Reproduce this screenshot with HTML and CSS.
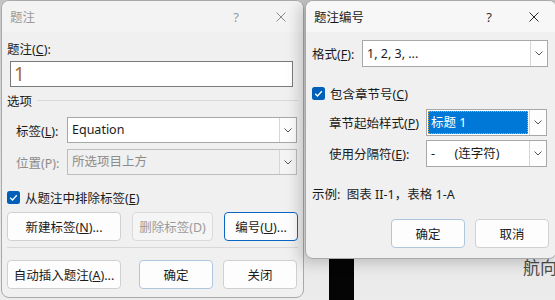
FILE: index.html
```html
<!DOCTYPE html>
<html lang="zh-CN">
<head>
    <meta charset="UTF-8">
    <title>题注</title>
    <link rel="stylesheet" href="styles.css">
</head>
<body>
    <div class="desktop">
        <div class="doc-bar"></div>
        <div class="doc-text">航向</div>

        <div class="dialog caption-dlg">
            <div class="titlebar inactive">
                <span class="title">题注</span>
                <span class="help">?</span>
                <svg class="close" width="10" height="10" viewBox="0 0 10 10"><path d="M0.5 0.5 L9.5 9.5 M9.5 0.5 L0.5 9.5"/></svg>
            </div>
            <div class="body">
                <div class="line-label">题注(<u>C</u>):</div>
                <div class="text-input">1</div>
                <div class="group-head"><span>选项</span><i></i></div>

                <div class="field-row">
                    <span class="field-label">标签(<u>L</u>):</span>
                    <div class="combo wide">
                        <span class="combo-value">Equation</span>
                        <span class="drop"><svg width="8" height="5" viewBox="0 0 8 5"><polyline points="0.5,0.5 4,4 7.5,0.5"/></svg></span>
                    </div>
                </div>
                <div class="field-row gap6">
                    <span class="field-label muted">位置(P):</span>
                    <div class="combo wide disabled">
                        <span class="combo-value">所选项目上方</span>
                        <span class="drop"><svg width="8" height="5" viewBox="0 0 8 5"><polyline points="0.5,0.5 4,4 7.5,0.5"/></svg></span>
                    </div>
                </div>

                <div class="check-row left-check">
                    <svg class="check" width="13" height="13" viewBox="0 0 13 13"><rect width="13" height="13" rx="2.5"/><polyline points="3.2,6.8 5.5,9 9.8,4.3"/></svg>
                    <span>从题注中排除标签(<u>E</u>)</span>
                </div>

                <div class="btn-row first">
                    <button class="btn w114">新建标签(<u>N</u>)...</button>
                    <button class="btn w80 disabled">删除标签(D)</button>
                    <button class="btn w74 focused">编号(<u>U</u>)...</button>
                </div>
                <div class="sep"></div>
                <div class="btn-row second">
                    <button class="btn w114">自动插入题注(<u>A</u>)...</button>
                    <button class="btn w74 default ok">确定</button>
                    <button class="btn w74 closebtn">关闭</button>
                </div>
            </div>
        </div>

        <div class="dialog number-dlg">
            <div class="titlebar">
                <span class="title">题注编号</span>
                <span class="help">?</span>
                <svg class="close" width="10" height="10" viewBox="0 0 10 10"><path d="M0.5 0.5 L9.5 9.5 M9.5 0.5 L0.5 9.5"/></svg>
            </div>
            <div class="body">
                <div class="field-row format-row">
                    <span class="field-label fmt">格式(<u>F</u>):</span>
                    <div class="combo fmt-combo">
                        <span class="combo-value">1, 2, 3, ...</span>
                        <span class="drop"><svg width="8" height="5" viewBox="0 0 8 5"><polyline points="0.5,0.5 4,4 7.5,0.5"/></svg></span>
                    </div>
                </div>

                <div class="check-row chapter-check">
                    <svg class="check" width="13" height="13" viewBox="0 0 13 13"><rect width="13" height="13" rx="2.5"/><polyline points="3.2,6.8 5.5,9 9.8,4.3"/></svg>
                    <span>包含章节号(<u>C</u>)</span>
                </div>

                <div class="field-row sub first-sub">
                    <span class="field-label sub-label">章节起始样式(<u>P</u>)</span>
                    <div class="combo sub-combo">
                        <span class="combo-value selected">标题 1</span>
                        <span class="drop"><svg width="8" height="5" viewBox="0 0 8 5"><polyline points="0.5,0.5 4,4 7.5,0.5"/></svg></span>
                    </div>
                </div>
                <div class="field-row sub second-sub">
                    <span class="field-label sub-label">使用分隔符(<u>E</u>):</span>
                    <div class="combo sub-combo">
                        <span class="combo-value">-&nbsp;&nbsp;&nbsp;&nbsp;&nbsp;&nbsp;(连字符)</span>
                        <span class="drop"><svg width="8" height="5" viewBox="0 0 8 5"><polyline points="0.5,0.5 4,4 7.5,0.5"/></svg></span>
                    </div>
                </div>

                <div class="example">示例:&nbsp; 图表 II-1，表格 1-A</div>

                <div class="btn-row right-btns">
                    <button class="btn w74 default">确定</button>
                    <button class="btn w74">取消</button>
                </div>
            </div>
        </div>
    </div>
</body>
</html>
```

FILE: styles.css
```css
* {
    box-sizing: border-box;
}

body {
    margin: 0;
    width: 555px;
    height: 300px;
    overflow: hidden;
    font-family: "Noto Sans", "Noto Sans CJK SC", sans-serif;
    font-size: 12.5px;
    color: #1b1b1b;
}

u {
    text-decoration: underline;
    text-underline-offset: 1px;
}

.desktop {
    position: relative;
    width: 555px;
    height: 300px;
    overflow: hidden;
    background: linear-gradient(#c4c4c4, #e2e2e2 60%, #ececec);
}

/* document behind the dialogs */
.doc-bar {
    position: absolute;
    left: 329px;
    top: 250px;
    width: 25px;
    height: 50px;
    background: #050505;
}

.doc-text {
    position: absolute;
    left: 523px;
    top: 254px;
    white-space: nowrap;
    font-family: "Noto Sans CJK SC", sans-serif;
    font-size: 17px;
    color: #4a4a4a;
}

.dialog {
    position: absolute;
    background: #f0f0f0;
    border: 1px solid #a9a9a9;
    border-radius: 8px;
    overflow: hidden;
}

.caption-dlg {
    left: 1px;
    top: 0;
    width: 303px;
    height: 298px;
}

.number-dlg {
    left: 305px;
    top: 0;
    width: 252px;
    height: 259px;
    box-shadow: -6px 4px 14px rgba(0, 0, 0, 0.18);
}

.titlebar {
    display: flex;
    align-items: center;
    height: 31px;
    padding-left: 8px;
    background: #f3f3f3;
}

.number-dlg .titlebar {
    background: #f7f7f7;
}

.titlebar .title {
    flex: 1;
    font-size: 12.5px;
}

.titlebar.inactive .title,
.titlebar.inactive .help {
    color: #9a9a9a;
}

.help {
    width: 12px;
    text-align: center;
    font-size: 13px;
    color: #333;
    margin-right: 34px;
}

.close {
    margin-right: 17px;
}

.close path {
    stroke: #2a2a2a;
    stroke-width: 1;
    fill: none;
}

.titlebar.inactive .close path {
    stroke: #8a8a8a;
}

.caption-dlg .body {
    padding: 0 5px 0 5px;
}

.number-dlg .body {
    padding: 0 7px 0 6px;
}

.line-label {
    height: 18px;
    line-height: 18px;
    margin-top: 9px;
}

.text-input {
    margin-top: 2px;
    margin-left: 3px;
    width: 283px;
    height: 26px;
    border: 1px solid #7a7a7a;
    background: #fff;
    padding-left: 3px;
    font-family: "Noto Sans", sans-serif;
    font-size: 19px;
    line-height: 24px;
    color: #a9691f;
}

.group-head {
    display: flex;
    align-items: center;
    height: 18px;
    margin-top: 4px;
}

.group-head i {
    flex: 1;
    height: 1px;
    margin-left: 5px;
    background: #d9d9d9;
}

.field-row {
    display: flex;
    align-items: center;
    margin-top: 8px;
}

.field-row.gap6 {
    margin-top: 6px;
}

.field-label {
    width: 60px;
    padding-left: 9px;
}

.muted {
    color: #8c8c8c;
}

.combo {
    display: flex;
    height: 26px;
    border: 1px solid #a8a8a8;
    background: #fff;
}

.combo.wide {
    width: 230px;
}

.combo.disabled {
    background: #f0f0f0;
    border-color: #bdbdbd;
    color: #8c8c8c;
}

.combo-value {
    flex: 1;
    padding-left: 4px;
    line-height: 24px;
    white-space: nowrap;
}

.drop {
    width: 17px;
    display: flex;
    align-items: center;
    justify-content: center;
    border-left: 1px solid #d6d6d6;
    background: #fdfdfd;
}

.combo.disabled .drop {
    background: #f4f4f4;
}

.drop polyline {
    fill: none;
    stroke: #555;
    stroke-width: 1;
}

.check-row {
    display: flex;
    align-items: center;
    height: 18px;
}

.check-row .check {
    margin-right: 5px;
}

.check rect {
    fill: #005fb8;
}

.check polyline {
    fill: none;
    stroke: #fff;
    stroke-width: 1.3;
}

.left-check {
    margin-top: 13px;
}

.btn-row {
    display: flex;
}

.btn-row.first {
    margin-top: 6px;
    justify-content: space-between;
    width: 291px;
}

.btn-row.second {
    margin-top: 12px;
}

.btn-row.second .ok {
    margin-left: 18px;
}

.btn-row.second .closebtn {
    margin-left: 10px;
}

.sep {
    margin-top: 6px;
    width: 291px;
    height: 1px;
    background: #d8d8d8;
}

.btn {
    height: 29px;
    padding: 0;
    font-family: inherit;
    font-size: 12.5px;
    color: #1b1b1b;
    background: #fdfdfd;
    border: 1px solid #d0d0d0;
    border-radius: 4px;
}

.btn.disabled {
    background: #f5f5f5;
    color: #9a9a9a;
    border-color: #dadada;
}

.btn.focused {
    border-color: #0a66c2;
}

.btn.default {
    border-color: #b0c6de;
}

.w114 { width: 114px; }
.w80 { width: 81px; }
.w74 { width: 74px; }

/* numbering dialog */
.format-row {
    margin-top: 8px;
}

.field-label.fmt {
    width: 50px;
    padding-left: 0;
}

.fmt-combo {
    width: 186px;
    height: 27px;
}

.fmt-combo .combo-value {
    line-height: 25px;
}

.chapter-check {
    margin-top: 17px;
}

.field-row.sub {
    padding-left: 17px;
}

.first-sub {
    margin-top: 7px;
}

.second-sub {
    margin-top: 4px;
}

.sub-label {
    width: 97px;
    padding-left: 0;
}

.sub-combo {
    width: 121px;
    height: 27px;
}

.sub-combo .combo-value {
    line-height: 25px;
}

.combo-value.selected {
    margin: 1px;
    padding-left: 2px;
    line-height: 21px;
    background: #0078d7;
    color: #fff;
    border: 1px dotted #e8a040;
}

.example {
    margin-top: 19px;
    height: 18px;
    line-height: 18px;
}

.right-btns {
    margin-top: 15px;
    justify-content: flex-end;
    gap: 10px;
}
```
